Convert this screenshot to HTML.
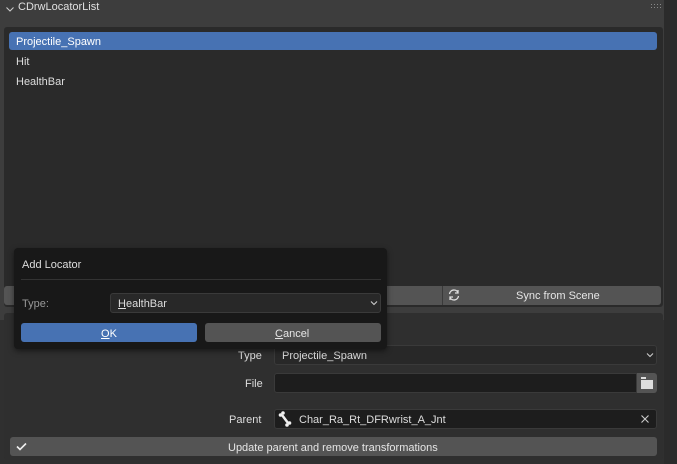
<!DOCTYPE html>
<html><head><style>
*{box-sizing:border-box;margin:0;padding:0}
body{width:677px;height:464px;background:#303030;font-family:"Liberation Sans",sans-serif;font-size:11px;color:#ddd;position:relative;overflow:hidden}
.a{position:absolute}
.t{white-space:nowrap}
</style></head><body>
<div class="a" style="left:0;top:0;width:668px;height:20px;background:#3d3d3d"></div>
<svg class="a" style="left:5px;top:4px" width="10" height="10" viewBox="0 0 10 10"><path d="M1.5 3.5L5 7l3.5-3.5" fill="none" stroke="#ccc" stroke-width="1.1"/></svg>
<div class="a t" style="left:18px;top:1px;font-size:11px;color:#e0e0e0">CDrwLocatorList</div>
<svg class="a" style="left:651px;top:4px" width="10" height="6"><g fill="#888"><rect x="0" y="0" width="1" height="1"/><rect x="3" y="0" width="1" height="1"/><rect x="6" y="0" width="1" height="1"/><rect x="9" y="0" width="1" height="1"/><rect x="0" y="3" width="1" height="1"/><rect x="3" y="3" width="1" height="1"/><rect x="6" y="3" width="1" height="1"/><rect x="9" y="3" width="1" height="1"/></g></svg>
<div class="a" style="left:0;top:20px;width:668px;height:300px;background:#3d3d3d"></div>
<div class="a" style="left:4px;top:27px;width:659px;height:280px;background:#2a2a2a;border-radius:3px"></div>
<div class="a" style="left:9px;top:32px;width:648px;height:18px;background:#4772b3;border-radius:3px"></div>
<div class="a t" style="left:16px;top:36px;color:#fff">Projectile_Spawn</div>
<div class="a t" style="left:16px;top:56px">Hit</div>
<div class="a t" style="left:16px;top:76px">HealthBar</div>
<div class="a" style="left:4px;top:286px;width:657px;height:19px;background:#545454;border-radius:3px"></div>
<div class="a" style="left:442px;top:286px;width:1px;height:19px;background:#3a3a3a"></div>
<svg class="a" style="left:447px;top:288px" width="14" height="14" viewBox="0 0 14 14" fill="none" stroke="#ddd" stroke-width="1.3"><path d="M2.5 6A4.5 4.5 0 0 1 11 4.5M11 2v3H8M11.5 8A4.5 4.5 0 0 1 3 9.5M3 12V9h3"/></svg>
<div class="a t" style="left:516px;top:290px;color:#e6e6e6">Sync from Scene</div>
<div class="a" style="left:4px;top:313px;width:659px;height:147px;background:#2f2f2f;border-radius:3px"></div>
<div class="a" style="left:664px;top:0;width:13px;height:464px;background:#2b2b2b"></div>
<div class="a t" style="left:238px;top:350px">Type</div>
<div class="a" style="left:274px;top:345px;width:383px;height:20px;background:#282828;border:1px solid #3a3a3a;border-radius:3px"></div>
<div class="a t" style="left:282px;top:350px">Projectile_Spawn</div>
<svg class="a" style="left:646px;top:352px" width="8" height="6"><path d="M1 1.5l3 3 3-3" fill="none" stroke="#ccc" stroke-width="1.1"/></svg>
<div class="a t" style="left:245px;top:378px">File</div>
<div class="a" style="left:274px;top:373px;width:363px;height:20px;background:#1d1d1d;border:1px solid #3a3a3a;border-radius:3px 0 0 3px"></div>
<div class="a" style="left:637px;top:373px;width:20px;height:20px;background:#545454;border-radius:0 3px 3px 0"></div>
<svg class="a" style="left:640px;top:376px" width="14" height="14"><path d="M1 1h5v2H1z" fill="#ddd"/><path d="M1 4h12v9H1z" fill="#ddd"/></svg>
<div class="a t" style="left:229px;top:414px">Parent</div>
<div class="a" style="left:274px;top:409px;width:383px;height:20px;background:#1d1d1d;border:1px solid #3a3a3a;border-radius:3px"></div>
<svg class="a" style="left:278px;top:411px" width="14" height="16" viewBox="0 0 14 16"><path d="M4 4l6 8" stroke="#eee" stroke-width="2.5"/><circle cx="2.5" cy="4" r="1.8" fill="#eee"/><circle cx="5" cy="2" r="1.8" fill="#eee"/><circle cx="9" cy="14" r="1.8" fill="#eee"/><circle cx="11.5" cy="12" r="1.8" fill="#eee"/></svg>
<div class="a t" style="left:299px;top:414px">Char_Ra_Rt_DFRwrist_A_Jnt</div>
<svg class="a" style="left:641px;top:415px" width="8" height="8"><path d="M0.5 0.5l7 7M7.5 0.5l-7 7" stroke="#ccc" stroke-width="1.1"/></svg>
<div class="a" style="left:10px;top:437px;width:647px;height:19px;background:#545454;border-radius:3px"></div>
<svg class="a" style="left:16px;top:442px" width="11" height="9"><path d="M1 4.5l3 3 6-6" fill="none" stroke="#eee" stroke-width="1.6"/></svg>
<div class="a t" style="left:228px;top:442px;color:#e6e6e6">Update parent and remove transformations</div>
<div class="a" style="left:14px;top:248px;width:373px;height:101px;background:#181818;border-radius:4px;box-shadow:0 2px 6px rgba(0,0,0,.5)"></div>
<div class="a t" style="left:22px;top:259px;color:#ddd">Add Locator</div>
<div class="a" style="left:21px;top:279px;width:360px;height:1px;background:#333"></div>
<div class="a t" style="left:22px;top:298px;color:#999">Type:</div>
<div class="a" style="left:110px;top:293px;width:271px;height:20px;background:#282828;border:1px solid #3a3a3a;border-radius:3px"></div>
<div class="a t" style="left:118px;top:298px"><u>H</u>ealthBar</div>
<svg class="a" style="left:370px;top:300px" width="8" height="6"><path d="M1 1.5l3 3 3-3" fill="none" stroke="#ccc" stroke-width="1.1"/></svg>
<div class="a" style="left:21px;top:323px;width:176px;height:19px;background:#4772b3;border-radius:3px"></div>
<div class="a t" style="left:101px;top:328px;color:#fff"><u>O</u>K</div>
<div class="a" style="left:205px;top:323px;width:176px;height:19px;background:#545454;border-radius:3px"></div>
<div class="a t" style="left:275px;top:328px;color:#e6e6e6"><u>C</u>ancel</div>
</body></html>
